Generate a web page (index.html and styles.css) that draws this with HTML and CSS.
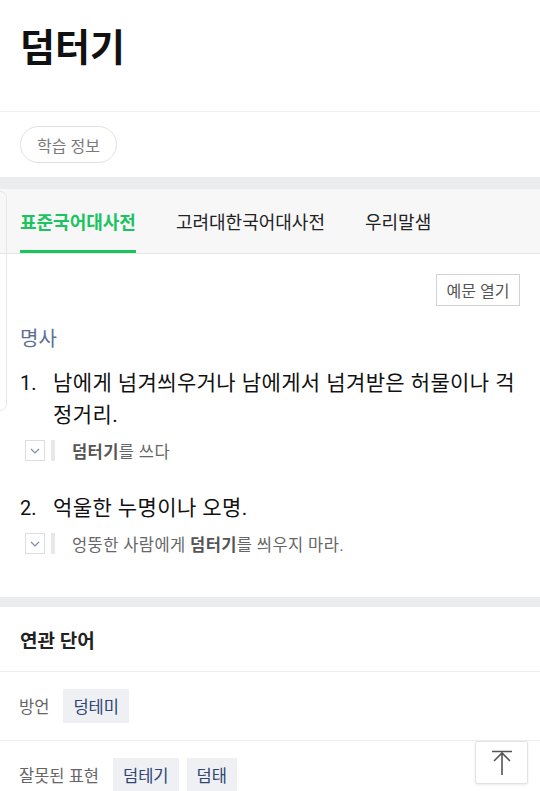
FILE: index.html
```html
<!DOCTYPE html>
<html lang="ko">
<head>
<meta charset="utf-8">
<title>덤터기</title>
<link rel="stylesheet" href="styles.css">
</head>
<body>
<div class="page">
  <header class="entry-head">
    <h1 class="entry-title">덤터기</h1>
  </header>
  <div class="study-row">
    <span class="study-pill">학습 정보</span>
  </div>
  <div class="band"></div>
  <section class="dict">
    <div class="side-edge"></div>
    <nav class="tabs">
      <span class="tab active">표준국어대사전</span>
      <span class="tab">고려대한국어대사전</span>
      <span class="tab">우리말샘</span>
    </nav>
    <div class="dict-body">
      <div class="tools">
        <span class="ex-btn">예문 열기</span>
      </div>
      <div class="pos">명사</div>
      <ol class="senses">
        <li class="sense">
          <div class="def"><span class="num">1.</span><span class="def-text">남에게 넘겨씌우거나 남에게서 넘겨받은 허물이나 걱정거리.</span></div>
          <div class="example">
            <span class="ex-toggle"><svg width="12" height="8" viewBox="0 0 12 8"><path d="M2 2l4 4 4-4" fill="none" stroke="#7d8cab" stroke-width="1.2"/></svg></span>
            <span class="ex-bar"></span>
            <span class="ex-text"><b>덤터기</b>를 쓰다</span>
          </div>
        </li>
        <li class="sense">
          <div class="def"><span class="num">2.</span><span class="def-text">억울한 누명이나 오명.</span></div>
          <div class="example">
            <span class="ex-toggle"><svg width="12" height="8" viewBox="0 0 12 8"><path d="M2 2l4 4 4-4" fill="none" stroke="#7d8cab" stroke-width="1.2"/></svg></span>
            <span class="ex-bar"></span>
            <span class="ex-text">엉뚱한 사람에게 <b>덤터기</b>를 씌우지 마라.</span>
          </div>
        </li>
      </ol>
    </div>
  </section>
  <div class="band band-2"></div>
  <section class="related">
    <h2 class="related-title">연관 단어</h2>
    <div class="rel-row">
      <span class="rel-label">방언</span>
      <span class="tag">덩테미</span>
    </div>
    <div class="rel-row">
      <span class="rel-label">잘못된 표현</span>
      <span class="tag">덤테기</span>
      <span class="tag">덤태</span>
    </div>
  </section>
  <a class="to-top" href="#">
    <svg width="26" height="28" viewBox="0 0 26 28"><path d="M3 2.5h20M13 4v22M5 12l8-8 8 8" fill="none" stroke="#555" stroke-width="1.6"/></svg>
  </a>
</div>
</body>
</html>
```

FILE: styles.css
```css
html, body {
  margin: 0;
  padding: 0;
  background: #fff;
}
body {
  font-family: Roboto, "Noto Sans CJK KR", "Noto Sans", sans-serif;
  color: #111;
  overflow: hidden;
}
.page {
  width: 540px;
  position: relative;
}
.entry-head {
  height: 112px;
  padding: 25px 20px 0;
  box-sizing: border-box;
  border-bottom: 1px solid #f0f1f2;
}
.entry-title {
  margin: 0;
  font-size: 38px;
  line-height: 46px;
  font-weight: 700;
  color: #111;
}
.study-row {
  padding: 14px 20px;
  height: 65px;
  box-sizing: border-box;
}
.study-pill {
  display: inline-flex;
  align-items: center;
  justify-content: center;
  height: 37px;
  padding: 0 16px;
  box-sizing: border-box;
  border: 1px solid #e2e2e2;
  border-radius: 19px;
  font-size: 16px;
  color: #7a7a7a;
}
.band {
  height: 12px;
  background: #ebecee;
}
.band-2 {
  height: 10px;
}
.dict {
  position: relative;
}
.side-edge {
  position: absolute;
  left: -300px;
  top: 2px;
  width: 305px;
  height: 218px;
  border: 1px solid #e6e7e9;
  border-radius: 7px;
  pointer-events: none;
}
.tabs {
  display: flex;
  gap: 40px;
  padding: 0 20px;
  height: 65px;
  box-sizing: border-box;
  background: #f7f7f8;
  border-bottom: 1px solid #e6e6e6;
}
.tab {
  height: 64px;
  padding-top: 3px;
  box-sizing: border-box;
  border-bottom: 3px solid transparent;
  display: flex;
  align-items: center;
  font-size: 18px;
  color: #222;
}
.tab.active {
  color: #1bc45f;
  font-weight: 700;
  border-bottom-color: #1bc45f;
}
.dict-body {
  padding: 20px 20px 43px;
}
.tools {
  display: flex;
  justify-content: flex-end;
}
.ex-btn {
  display: inline-flex;
  align-items: center;
  justify-content: center;
  width: 84px;
  height: 32px;
  box-sizing: border-box;
  border: 1px solid #d3d3d3;
  font-size: 16px;
  color: #555;
}
.pos {
  margin-top: 19px;
  font-size: 20px;
  line-height: 28px;
  color: #5c7092;
}
.senses {
  list-style: none;
  margin: 14px 0 0;
  padding: 0;
}
.sense + .sense {
  margin-top: 31px;
}
.def {
  display: flex;
  font-size: 21px;
  line-height: 32px;
  color: #111;
}
.num {
  flex: none;
  width: 33px;
  font-size: 20px;
}
.def-text {
  letter-spacing: 0.4px;
}
.example {
  display: flex;
  align-items: center;
  margin-top: 9px;
  height: 21px;
  padding-left: 5px;
}
.ex-toggle {
  width: 20px;
  height: 21px;
  box-sizing: border-box;
  border: 1px solid #dcdde0;
  display: flex;
  align-items: center;
  justify-content: center;
}
.ex-bar {
  width: 4px;
  height: 21px;
  background: #e8e8e8;
  margin-left: 6px;
}
.ex-text {
  margin-left: 17px;
  font-size: 16.5px;
  letter-spacing: 0.4px;
  color: #666;
}
.ex-text b {
  font-weight: 700;
  color: #555;
}
.related-title {
  margin: 0;
  height: 65px;
  box-sizing: border-box;
  padding: 0 20px;
  display: flex;
  align-items: center;
  font-size: 19px;
  font-weight: 700;
  color: #222;
  border-bottom: 1px solid #eeeff0;
}
.rel-row {
  display: flex;
  align-items: center;
  gap: 8px;
  padding: 17px 20px 17px 19px;
  border-bottom: 1px solid #eeeff0;
}
.rel-label {
  font-size: 16.5px;
  color: #666;
  margin-right: 6px;
}
.tag {
  display: inline-flex;
  align-items: center;
  height: 34px;
  padding: 0 10px;
  background: #eef0f3;
  font-size: 16.5px;
  color: #2f4474;
}
.to-top {
  position: fixed;
  right: 12px;
  bottom: 7px;
  width: 53px;
  height: 43px;
  box-sizing: border-box;
  background: #fff;
  border: 1px solid #e2e2e2;
  border-radius: 2px;
  box-shadow: 0 1px 3px rgba(0,0,0,0.08);
  display: flex;
  align-items: center;
  justify-content: center;
}
```
